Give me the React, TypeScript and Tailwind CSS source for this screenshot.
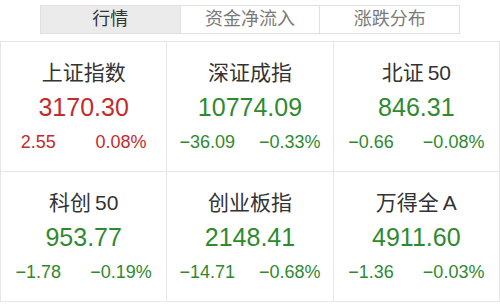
const TABS = ["行情", "资金净流入", "涨跌分布"];

interface IndexRow {
  name: string;
  /** latijnse staart die iOS met een kleine spatie van de CJK-tekens scheidt */
  tail?: string;
  price: string;
  change: string;
  pct: string;
  up: boolean;
}

const INDICES: IndexRow[] = [
  { name: "上证指数", price: "3170.30", change: "2.55", pct: "0.08%", up: true },
  { name: "深证成指", price: "10774.09", change: "−36.09", pct: "−0.33%", up: false },
  { name: "北证", tail: "50", price: "846.31", change: "−0.66", pct: "−0.08%", up: false },
  { name: "科创", tail: "50", price: "953.77", change: "−1.78", pct: "−0.19%", up: false },
  { name: "创业板指", price: "2148.41", change: "−14.71", pct: "−0.68%", up: false },
  { name: "万得全", tail: "A", price: "4911.60", change: "−1.36", pct: "−0.03%", up: false },
];

function IndexCell({ row }: { row: IndexRow }) {
  const color = row.up ? "text-[#c42b2b]" : "text-[#2f8a2f]";
  return (
    <div className="flex h-[130px] flex-col items-center border-b border-r border-[#e6e6e6] pt-[18px]">
      <div className="text-[21px] leading-[26px] text-[#333]">
        {row.name}
        {row.tail ? <span className="ml-[4px]">{row.tail}</span> : null}
      </div>
      <div className={`mt-[6px] text-[25px] leading-[30px] ${color}`}>{row.price}</div>
      <div className={`mt-[9px] flex w-full justify-around text-[18px] leading-[22px] ${color}`}>
        <span>{row.change}</span>
        <span>{row.pct}</span>
      </div>
    </div>
  );
}

export default function App() {
  return (
    <div
      className="h-[306px] w-[500px] overflow-hidden bg-white pt-[5px]"
      style={{ fontFamily: '"Liberation Sans", "Noto Sans CJK SC", sans-serif' }}
    >
      <div className="mx-auto flex h-[29px] w-[420px] border border-[#e0e0e0]">
        {TABS.map((t, i) => (
          <div
            key={t}
            className={
              i === 0
                ? "flex flex-1 items-center justify-center bg-[#ebebeb] text-[18px] text-[#333]"
                : "flex flex-1 items-center justify-center border-l border-[#e0e0e0] text-[18px] text-[#7a7a7a]"
            }
          >
            {t}
          </div>
        ))}
      </div>
      <div className="mt-[7px] grid grid-cols-3 border-l border-t border-[#e6e6e6]">
        {INDICES.map((row) => (
          <IndexCell key={row.name} row={row} />
        ))}
      </div>
    </div>
  );
}
